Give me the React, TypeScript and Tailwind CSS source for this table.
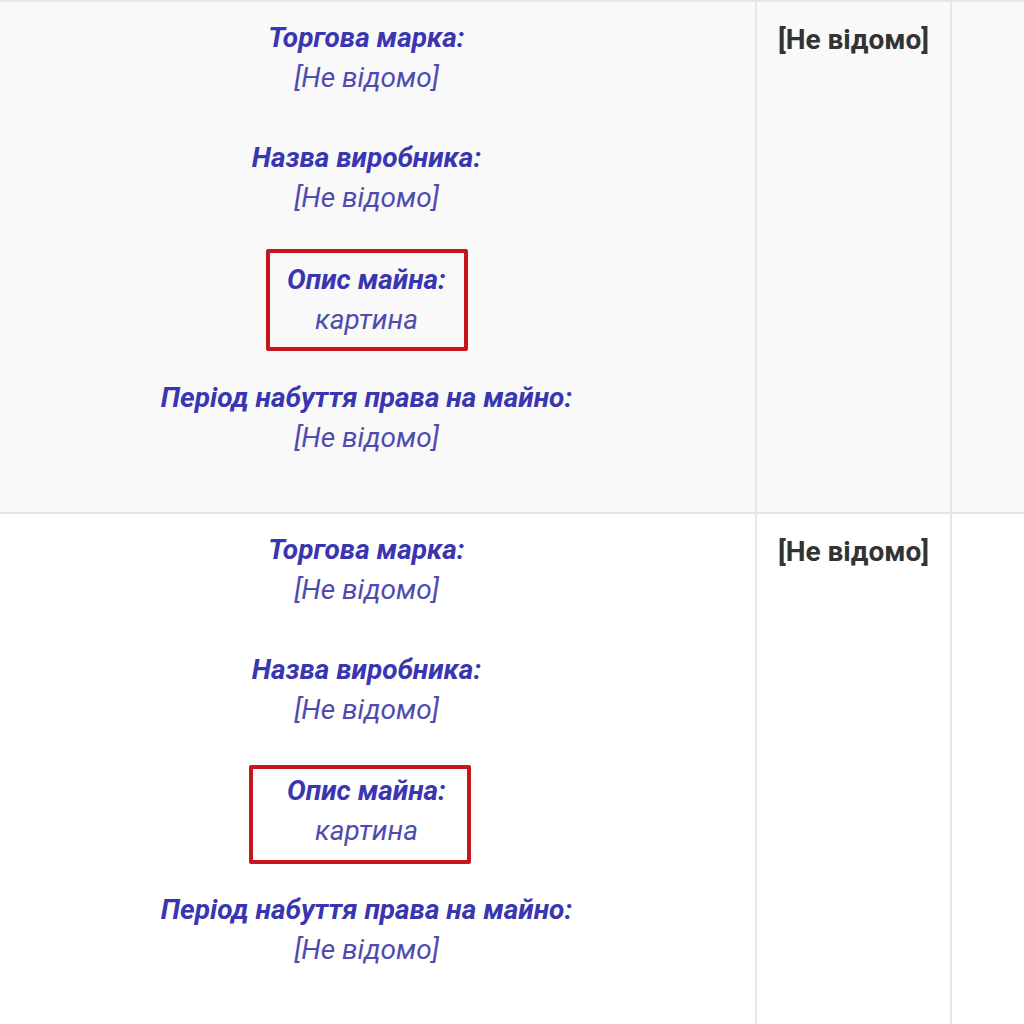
const rows = [
  { box: "w-[202px] h-[102px] -mt-[9px]" },
  { box: "w-[222px] h-[99px] -mt-[5px] mr-[14px] pl-[14px] pb-[8px]" },
];

const Field = ({ label, value, boxed, box }: { label: string; value: string; boxed?: boolean; box?: string }) => {
  const inner = (
    <>
      <div className="font-bold italic text-[#3a35b0] leading-[40px]">{label}</div>
      <div className="italic text-[#4f4bb0] leading-[40px]">{value}</div>
    </>
  );
  return (
    <div className="flex flex-col items-center h-[120px]">
      {boxed ? (
        <div className={`flex flex-col items-center justify-center border-4 border-[#c4161c] rounded-[2px] ${box}`}>
          {inner}
        </div>
      ) : (
        inner
      )}
    </div>
  );
};

export default function App() {
  return (
    <div className="w-[1024px] h-[1024px] overflow-hidden bg-white font-['Roboto',sans-serif] text-[28px]">
      <table className="w-full border-collapse border-t-2 border-[#e6e6e6]">
        <tbody>
          {rows.map((r, i) => (
            <tr key={i} className={`border-b-2 border-[#e3e3e3] ${i === 0 ? "bg-[#f9f9f9]" : "bg-white"}`}>
              <td className="w-[756px] align-top pt-[16px] pb-[14px] pr-[22px] border-r-2 border-[#e6e6e6]">
                <Field label="Торгова марка:" value="[Не відомо]" />
                <Field label="Назва виробника:" value="[Не відомо]" />
                <Field label="Опис майна:" value="картина" boxed box={r.box} />
                <Field label="Період набуття права на майно:" value="[Не відомо]" />
              </td>
              <td className="w-[195px] align-top pt-[18px] text-center font-bold text-[#333] leading-[40px] border-r-2 border-[#e6e6e6]">
                [Не відомо]
              </td>
              <td />
            </tr>
          ))}
        </tbody>
      </table>
    </div>
  );
}
